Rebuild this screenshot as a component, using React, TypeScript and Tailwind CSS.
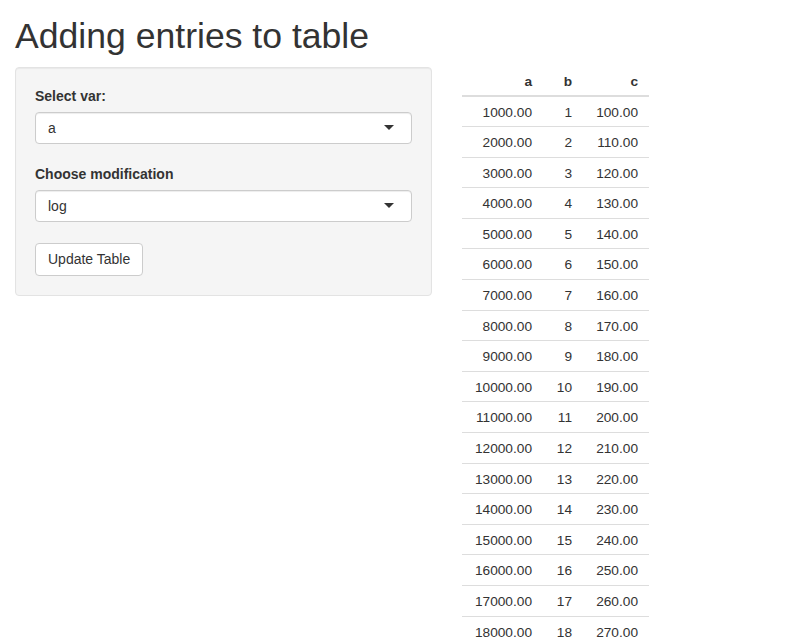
import React from "react";

// Shiny-style page: sidebar with two selects + button, table of values on the right.

const rows = Array.from({ length: 18 }, (_, i) => {
  const n = i + 1;
  return { a: `${n * 1000}.00`, b: `${n}`, c: `${90 + n * 10}.00` };
});

function FakeSelect({ value }: { value: string }) {
  return (
    <div className="flex h-[32px] w-full items-center justify-between rounded-[4px] border border-[#cccccc] bg-white pl-[12px] pr-[17px] shadow-[inset_0_1px_1px_rgba(0,0,0,0.075)]">
      <span className="text-[14px] leading-[20px] text-[#333333]">{value}</span>
      <span className="h-0 w-0 border-x-[5px] border-t-[5px] border-x-transparent border-t-[#333333]" />
    </div>
  );
}

export default function App() {
  return (
    <div
      className="min-h-screen bg-white px-[15px] text-[#333333]"
      style={{ fontFamily: '"Liberation Sans", Arial, sans-serif' }}
    >
      <h2 className="mb-[11px] pt-[17px] text-[35.6px] font-normal leading-[38.5px]">
        Adding entries to table
      </h2>
      <div className="flex items-start gap-[30px]">
        <div className="w-[417px] rounded-[4px] border border-[#e3e3e3] bg-[#f5f5f5] px-[19px] pb-[19px] pt-[18px] shadow-[inset_0_1px_1px_rgba(0,0,0,0.05)]">
          <label className="mb-[6px] block text-[14px] font-bold leading-[20px]">
            Select var:
          </label>
          <FakeSelect value="a" />
          <label className="mb-[6px] mt-[20px] block text-[14px] font-bold leading-[20px]">
            Choose modification
          </label>
          <FakeSelect value="log" />
          <button
            className="mt-[21px] h-[33px] rounded-[4px] border border-[#cccccc] bg-white px-[12px] text-[14px] leading-[20px] text-[#333333]"
            type="button"
          >
            Update Table
          </button>
        </div>
        <table className="border-collapse text-[13.7px]">
          <colgroup>
            <col className="w-[75px]" />
            <col className="w-[40px]" />
            <col className="w-[72px]" />
          </colgroup>
          <thead>
            <tr className="border-b-2 border-[#dddddd]">
              <th className="pb-[3px] pr-[5px] pt-[5px] text-right font-bold leading-[20px]">a</th>
              <th className="pb-[3px] pr-[5px] pt-[5px] text-right font-bold leading-[20px]">b</th>
              <th className="pb-[3px] pr-[11px] pt-[5px] text-right font-bold leading-[20px]">c</th>
            </tr>
          </thead>
          <tbody>
            {rows.map((r) => (
              <tr className="border-t border-[#dddddd]" key={r.b}>
                <td className="pb-[4px] pr-[5px] pt-[6px] text-right leading-[19.6px]">{r.a}</td>
                <td className="pb-[4px] pr-[5px] pt-[6px] text-right leading-[19.6px]">{r.b}</td>
                <td className="pb-[4px] pr-[11px] pt-[6px] text-right leading-[19.6px]">{r.c}</td>
              </tr>
            ))}
          </tbody>
        </table>
      </div>
    </div>
  );
}
